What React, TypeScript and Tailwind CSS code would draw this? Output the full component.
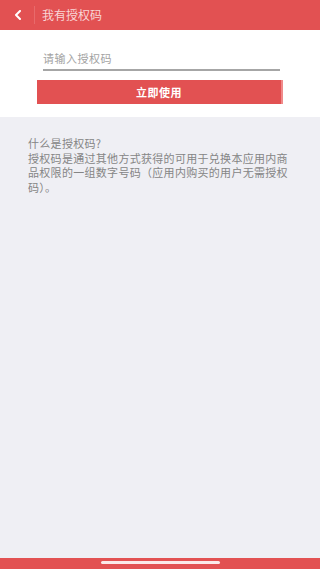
import React from "react";

export default function App() {
  return (
    <div
      className="w-[320px] h-[569px] flex flex-col bg-[#efeff4] overflow-hidden"
      style={{ fontFamily: '"Noto Sans CJK SC", "Noto Sans", sans-serif' }}
    >
      <div className="h-[30px] bg-[#e25152] flex items-center shrink-0">
        <div className="w-[34px] flex justify-center">
          <svg width="8" height="10" viewBox="0 0 8 10" className="ml-[1px]">
            <path d="M6 1 L2 5 L6 9" stroke="#ffffff" strokeWidth="2" fill="none" strokeLinecap="round" strokeLinejoin="round" />
          </svg>
        </div>
        <div className="w-px h-[18px] bg-[#e86a6b]" />
        <div className="ml-[7px] text-[12px] text-[#f9d6d6] leading-none">我有授权码</div>
      </div>
      <div className="bg-white h-[87px] shrink-0 flex flex-col items-center">
        <div className="mt-[21px] w-[237px] ml-[3px] h-[20px] border-b-2 border-[#a6a6a6] flex items-start">
          <span className="text-[11px] leading-[14px] text-[#a3a3a3] tracking-[0.5px]">请输入授权码</span>
        </div>
        <div className="mt-[9px] w-[246px] h-[24px] bg-[#e25152] border-r-2 border-[#f08a8a] flex items-center justify-center">
          <span className="text-[11px] font-bold text-white leading-none tracking-[0.5px]">立即使用</span>
        </div>
      </div>
      <div className="flex-1 px-[28px] pt-[19px] pr-[28px]">
        <p className="text-[11px] leading-[14.6px] text-[#858585] tracking-[0.3px]">
          什么是授权码?
          <br />
          授权码是通过其他方式获得的可用于兑换本应用内商品权限的一组数字号码（应用内购买的用户无需授权码）。
        </p>
      </div>
      <div className="h-[11px] bg-[#e25152] shrink-0 flex justify-center items-start">
        <div className="mt-[3px] w-[119px] h-[3px] rounded-full bg-[#fbe9e9]" />
      </div>
    </div>
  );
}
